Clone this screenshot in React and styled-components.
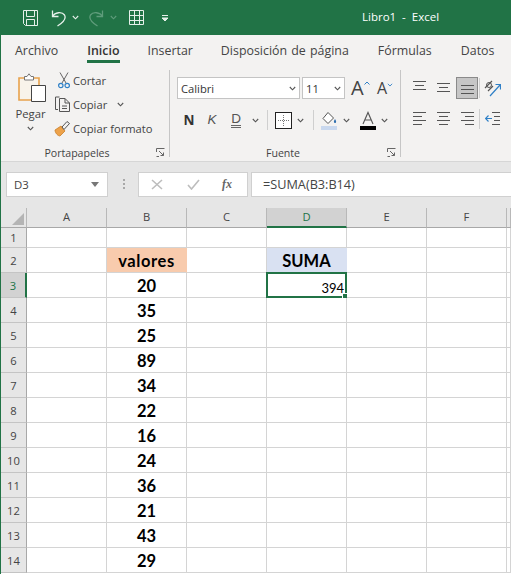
import * as React from 'react'
import styled, { createGlobalStyle } from 'styled-components'

const GREEN = '#217346'
const UI_FONT = '"Open Sans", "Noto Sans", sans-serif'

const GlobalStyle = createGlobalStyle`
  html, body {
    margin: 0;
    padding: 0;
    overflow: hidden;
    background: #fff;
  }
  * {
    box-sizing: border-box;
  }
`

const Window = styled.div`
  width: 511px;
  height: 574px;
  overflow: hidden;
  border-left: 1px solid ${GREEN};
  font-family: ${UI_FONT};
  color: #444;
  background: #fff;
`

const TitleBar = styled.header`
  height: 35px;
  margin-left: -1px;
  background: ${GREEN};
  display: flex;
  align-items: center;
  padding-left: 22px;
`

const TitleText = styled.span`
  position: absolute;
  left: 362px;
  top: 9px;
  color: #fff;
  font-size: 11.5px;
  line-height: 16px;
  white-space: pre;
`

const QatSlot = styled.span`
  display: flex;
  align-items: center;
  margin-left: ${(p) => p.$left || 0}px;
  transform: ${(p) => (p.$flip ? 'scaleX(-1)' : 'none')};
`

const Tabs = styled.nav`
  height: 30px;
  background: #f3f2f1;
  display: flex;
  gap: 28px;
  padding-left: 14px;
`

const Tab = styled.span`
  height: 28px;
  padding-top: 3px;
  line-height: 26px;
  font-size: 12.4px;
  word-spacing: 1px;
  white-space: nowrap;
  margin-left: ${(p) => p.$left || 0}px;
  color: ${(p) => (p.$active ? '#333' : '#444')};
  font-weight: ${(p) => (p.$active ? 600 : 400)};
  border-bottom: 3px solid ${(p) => (p.$active ? GREEN : 'transparent')};
`

const Ribbon = styled.section`
  height: 97px;
  background: #f3f2f1;
  border-bottom: 1px solid #d6d6d6;
  display: flex;
  padding-top: 4px;
`

const Group = styled.div`
  width: ${(p) => p.$width}px;
  flex: none;
  display: flex;
  flex-direction: column;
  position: relative;
`

const GroupBody = styled.div`
  height: 76px;
  display: flex;
`

const GroupLabel = styled.div`
  height: 16px;
  line-height: 16px;
  font-size: 10.6px;
  color: #444;
  display: flex;
  align-items: center;
  justify-content: center;
  padding-right: ${(p) => p.$shift || 0}px;
`

const Launcher = styled.svg`
  position: absolute;
  right: 4px;
  bottom: 4px;
  width: 9px;
  height: 9px;
`

const GroupDivider = styled.div`
  flex: none;
  width: 1px;
  height: 87px;
  margin-top: 1px;
  background: #c6c6c6;
`

const PasteColumn = styled.div`
  width: 53px;
  padding-top: 4px;
  display: flex;
  flex-direction: column;
  align-items: center;
  padding-left: 6px;
  font-size: 11.3px;
  line-height: 14px;
  gap: 5px;
  svg:first-child {
    margin-left: 3px;
  }
`

const ClipTools = styled.div`
  display: flex;
  flex-direction: column;
  margin-top: -1px;
`

const ClipRow = styled.div`
  height: 24px;
  display: flex;
  align-items: center;
  font-size: 11.2px;
  white-space: nowrap;
`

const ClipIcon = styled.span`
  width: 19px;
  display: flex;
  justify-content: ${(p) => (p.$start ? 'flex-start' : 'center')};
`

const FontColumn = styled.div`
  display: flex;
  flex-direction: column;
  padding-left: 7px;
  padding-top: 8px;
`

const ControlRow = styled.div`
  display: flex;
  align-items: center;
  height: ${(p) => p.$height}px;
  margin-bottom: ${(p) => p.$gap || 0}px;
`

const Combo = styled.div`
  width: ${(p) => p.$width}px;
  height: 22px;
  margin-right: 2px;
  background: #fff;
  border: 1px solid #c4c4c4;
  display: flex;
  align-items: center;
  justify-content: space-between;
  padding: 0 3px 0 3px;
  font-size: 11.2px;
  color: #333;
`

const Spot = styled.span`
  display: flex;
  align-items: center;
  justify-content: center;
  flex: none;
  width: ${(p) => p.$width}px;
  margin-left: ${(p) => p.$left || 0}px;
`

const SizeStep = styled.span`
  display: flex;
  align-items: flex-start;
  flex: none;
  width: ${(p) => p.$width}px;
  margin-left: ${(p) => p.$left}px;
`

const LetterA = styled.span`
  font-size: ${(p) => p.$size}px;
  line-height: 1;
  color: #444;
`

const StepMark = styled.span`
  margin-top: 3px;
  display: flex;
`

const StyleLetter = styled.span`
  font-family: ${(p) => (p.$bold ? '"Open Sans"' : '"Liberation Sans"')}, sans-serif;
  font-size: 13.5px;
  font-weight: ${(p) => (p.$bold ? 700 : 400)};
  font-style: ${(p) => (p.$italic ? 'italic' : 'normal')};
  color: ${(p) => (p.$bold ? '#333' : '#555')};
  border-bottom: ${(p) => (p.$under ? '3px double #666' : 'none')};
  line-height: ${(p) => (p.$under ? '13px' : '16px')};
`

const VRule = styled.span`
  flex: none;
  width: 1px;
  height: 20px;
  background: #cfcfcf;
  margin-left: ${(p) => p.$left || 0}px;
`

const AlignColumn = styled.div`
  display: grid;
  grid-template-columns: 24px 24px 24px 1px 24px;
  grid-template-rows: 22px 20px;
  row-gap: 10px;
  padding: 8px 0 0 6px;
  align-items: center;
  justify-items: center;
`

const AlignButton = styled.span`
  width: 22px;
  height: 22px;
  display: flex;
  align-items: center;
  justify-content: center;
  border: ${(p) => (p.$on ? '1px solid #8a8a8a' : 'none')};
  background: ${(p) => (p.$on ? '#c6c6c6' : 'transparent')};
`

const FormulaStrip = styled.section`
  height: 46px;
  background: #e6e6e6;
  display: flex;
  align-items: flex-start;
  padding: 10px 0 0 5px;
`

const NameBox = styled.div`
  width: 102px;
  height: 25px;
  background: #fff;
  border: 1px solid #d0d0d0;
  display: flex;
  align-items: center;
  justify-content: space-between;
  padding: 0 8px 0 7px;
  font-size: 11.4px;
  color: #444;
`

const Caret = styled.span`
  width: 0;
  height: 0;
  border-left: 4px solid transparent;
  border-right: 4px solid transparent;
  border-top: 5px solid #777;
`

const GripDots = styled.span`
  width: 2px;
  height: 10px;
  margin: 7px 13px 0 15px;
  background: repeating-linear-gradient(#a8a8a8 0 2px, transparent 2px 4px);
`

const FxBox = styled.div`
  width: 110px;
  height: 25px;
  background: #fff;
  border: 1px solid #d0d0d0;
  display: flex;
  align-items: center;
  padding-left: 12px;
  gap: 24px;
`

const FxLabel = styled.span`
  font-family: "Liberation Serif", serif;
  font-style: italic;
  font-weight: 700;
  font-size: 12px;
  color: #666;
  margin-left: -2px;
`

const FormulaInput = styled.div`
  flex: 1;
  height: 25px;
  margin-left: 3px;
  background: #fff;
  border: 1px solid #d0d0d0;
  border-right: none;
  padding-left: 11px;
  line-height: 23px;
  font-size: 12.7px;
  color: #444;
`

const Sheet = styled.div`
  display: grid;
  grid-template-columns: 26px repeat(6, 80px) 1fr;
  grid-template-rows: 20px 20px repeat(13, 25px);
  background: #fff;
`

const Corner = styled.div`
  background: #e6e6e6;
  border-bottom: 1px solid #a8a8a8;
  border-right: 1px solid #b8b8b8;
  position: relative;
  &::after {
    content: '';
    position: absolute;
    right: 2px;
    bottom: 2px;
    border-left: 12px solid transparent;
    border-bottom: 12px solid #b4b4b4;
  }
`

const ColHead = styled.div`
  background: ${(p) => (p.$on ? '#d2d2d2' : '#e6e6e6')};
  color: ${(p) => (p.$on ? GREEN : '#444')};
  border-right: 1px solid #b8b8b8;
  border-bottom: ${(p) => (p.$on ? `2px solid ${GREEN}` : '1px solid #a8a8a8')};
  font-size: 11.2px;
  line-height: 18px;
  text-align: center;
`

const RowHead = styled.div`
  background: ${(p) => (p.$on ? '#d2d2d2' : '#e6e6e6')};
  color: ${(p) => (p.$on ? GREEN : '#444')};
  border-right: ${(p) => (p.$on ? `2px solid ${GREEN}` : '1px solid #a8a8a8')};
  border-bottom: 1px solid #c4c4c4;
  font-size: 11.2px;
  display: flex;
  align-items: center;
  justify-content: center;
`

const Cell = styled.div`
  position: relative;
  background: ${(p) => p.$fill || '#fff'};
  border-right: 1px solid ${(p) => p.$fill || '#d4d4d4'};
  border-bottom: 1px solid #d4d4d4;
  font-family: Lato, "Liberation Sans", sans-serif;
  font-size: ${(p) => (p.$bold ? 16.5 : 13)}px;
  font-weight: ${(p) => (p.$bold ? 700 : 400)};
  letter-spacing: ${(p) => p.$track || 0}px;
  color: #000;
  display: flex;
  align-items: flex-end;
  justify-content: ${(p) => (p.$right ? 'flex-end' : 'center')};
  padding-right: ${(p) => (p.$right ? 2 : 0)}px;
  padding-bottom: 1px;
`

const Selection = styled.span`
  position: absolute;
  left: -1px;
  top: -1px;
  right: -1px;
  bottom: -1px;
  border: 2px solid ${GREEN};
  pointer-events: none;
  &::after {
    content: '';
    position: absolute;
    right: -4px;
    bottom: -4px;
    width: 6px;
    height: 6px;
    background: ${GREEN};
    border: 1px solid #fff;
    border-right: none;
    border-bottom: none;
  }
`

function Chevron({ color = '#555', size = 7 }) {
  return (
    <svg width={size} height={size - 2} viewBox="0 0 7 5" fill="none">
      <path d="M0.8 1 L3.5 3.8 L6.2 1" stroke={color} strokeWidth="1.1" />
    </svg>
  )
}

function SaveIcon() {
  return (
    <svg width="17" height="18" viewBox="0 0 17 18" fill="none" stroke="#e6f0ea" strokeWidth="1">
      <path d="M1.5 1.5 H15.5 V16.5 H3.5 L1.5 14.5 Z" />
      <path d="M4.5 1.5 V7.5 H12.5 V1.5" />
      <path d="M4.5 16.5 V10.5 H12.5 V16.5" />
    </svg>
  )
}

function UndoIcon({ color }) {
  return (
    <svg width="16" height="18" viewBox="0 0 16 18" fill="none" stroke={color} strokeWidth="1.3">
      <path d="M1.5 1.5 V7.5 H7.5" />
      <path d="M1.5 7.5 C4 3 11 2.5 13.5 6 C15.5 9.5 12 13.5 6.5 17" />
    </svg>
  )
}

function TableIcon() {
  return (
    <svg width="17" height="17" viewBox="0 0 17 17" fill="none" stroke="#e6f0ea" strokeWidth="1">
      <path d="M1.5 1.5 H15.5 V15.5 H1.5 Z M1.5 6.5 H15.5 M1.5 11.5 H15.5 M6.5 1.5 V15.5 M11.5 1.5 V15.5" />
    </svg>
  )
}

function CustomizeIcon() {
  return (
    <svg width="8" height="8" viewBox="0 0 8 8" fill="none" stroke="#e6f0ea" strokeWidth="1">
      <path d="M1 1.5 H7" />
      <path d="M1 4 L4 7 L7 4 Z" fill="#e6f0ea" />
    </svg>
  )
}

function PasteIcon() {
  return (
    <svg width="28" height="29" viewBox="0 0 28 29" fill="none">
      <path d="M1 5 H21 V27 H1 Z" stroke="#e8a24d" strokeWidth="1.6" fill="#f8f3ea" />
      <path d="M6.5 7 V3.5 H9 L11 0.8 L13 3.5 H15.5 V7 Z" stroke="#777" strokeWidth="1" fill="#fff" />
      <path d="M13.5 12.5 H27.5 V28.5 H13.5 Z" stroke="#444" strokeWidth="1" fill="#fff" />
    </svg>
  )
}

function ScissorsIcon() {
  return (
    <svg width="12" height="17" viewBox="0 0 12 17" fill="none">
      <path d="M2 0.5 L8 11 M10 0.5 L4 11" stroke="#666" strokeWidth="1" />
      <circle cx="2.8" cy="13.5" r="2.2" stroke="#2f80c7" strokeWidth="1.2" />
      <circle cx="9.2" cy="13.5" r="2.2" stroke="#2f80c7" strokeWidth="1.2" />
    </svg>
  )
}

function CopyIcon() {
  return (
    <svg width="17" height="16" viewBox="0 0 17 16" fill="none" stroke="#555" strokeWidth="1">
      <path d="M5.5 1 H1.5 V13.5 H4" />
      <path d="M5.5 2.5 H11 L15.5 7 V15.5 H5.5 Z" fill="#f3f2f1" />
      <path d="M11 2.5 V7 H15.5 M8 10 H13 M8 12.5 H13" />
    </svg>
  )
}

function BrushIcon() {
  return (
    <svg width="17" height="17" viewBox="0 0 17 17" fill="none">
      <path d="M1 10 L7 6 L11 11 L6 16 C4 16 1 13 1 10 Z" fill="#eda24a" stroke="#c97f28" strokeWidth="0.8" />
      <path d="M8 7 L13 1.5 L15.5 3.5 L10 9.5 Z" fill="#f3f2f1" stroke="#555" strokeWidth="1" />
    </svg>
  )
}

function LauncherGlyph() {
  return (
    <Launcher viewBox="0 0 9 9" fill="none" stroke="#666" strokeWidth="1">
      <path d="M0.5 4 V0.5 H8.5 M3 3 L7.5 7.5 M7.5 4.5 V7.5 H4.5" />
      <path d="M0.5 8.5 H3" />
    </Launcher>
  )
}

function BorderIcon() {
  return (
    <svg width="17" height="17" viewBox="0 0 17 17" fill="none">
      <rect x="0.5" y="0.5" width="16" height="16" stroke="#222" fill="#fff" />
      <path d="M8.5 3 V14 M3 8.5 H14" stroke="#777" strokeDasharray="1 1" />
    </svg>
  )
}

function FillIcon() {
  return (
    <svg width="17" height="19" viewBox="0 0 17 19" fill="none">
      <path d="M7 1.5 L12.5 7 L7 12.5 L2 7.5 Z" fill="#fff" stroke="#555" />
      <path d="M14 8 C15.5 10 15.5 12 14 12 C12.5 12 12.5 10 14 8 Z" fill="#2f6fb0" />
      <rect x="0" y="15" width="16" height="4" fill="#c9d8ee" />
    </svg>
  )
}

function FontColorIcon() {
  return (
    <svg width="16" height="19" viewBox="0 0 16 19" fill="none">
      <path d="M3 13 L8 1.5 L13 13 M5 9 H11" stroke="#555" strokeWidth="1.1" />
      <rect x="0" y="15" width="16" height="4" fill="#000" />
    </svg>
  )
}

function Lines({ rows, top = 0 }) {
  return (
    <svg width="15" height="14" viewBox="0 0 15 14" fill="none" stroke="#555" strokeWidth="1">
      {rows.map(([x1, x2], i) => (
        <path key={i} d={`M${x1} ${top + i * 4 + 0.5} H${x2}`} />
      ))}
    </svg>
  )
}

function OrientationIcon() {
  return (
    <svg width="17" height="17" viewBox="0 0 17 17" fill="none">
      <path d="M1 8 L8 1 M4 11 L9 6" stroke="#555" strokeWidth="1.2" />
      <circle cx="5" cy="5" r="2.5" stroke="#555" />
      <path d="M6 16 L16 5 M11.5 4.5 H16.5 V9.5" stroke="#2f80c7" strokeWidth="1.2" />
    </svg>
  )
}

function IndentIcon() {
  return (
    <svg width="15" height="14" viewBox="0 0 15 14" fill="none">
      <path d="M7 0.5 H15 M9 4.5 H15 M9 8.5 H15 M7 12.5 H15" stroke="#555" />
      <path d="M0.5 6.5 H7 M3.5 3.5 L0.5 6.5 L3.5 9.5" stroke="#2f80c7" strokeWidth="1.2" />
    </svg>
  )
}

const columns = ['A', 'B', 'C', 'D', 'E', 'F']

const cells = {
  B2: { text: 'valores', bold: true, fill: '#f8cbad', track: 0.6 },
  D2: { text: 'SUMA', bold: true, fill: '#d9e1f2' },
  D3: { text: '394', right: true, selected: true },
  B3: { text: '20', bold: true },
  B4: { text: '35', bold: true },
  B5: { text: '25', bold: true },
  B6: { text: '89', bold: true },
  B7: { text: '34', bold: true },
  B8: { text: '22', bold: true },
  B9: { text: '16', bold: true },
  B10: { text: '24', bold: true },
  B11: { text: '36', bold: true },
  B12: { text: '21', bold: true },
  B13: { text: '43', bold: true },
  B14: { text: '29', bold: true },
}

function SheetGrid() {
  const rows = Array.from({ length: 14 }, (_, i) => i + 1)
  return (
    <Sheet>
      <Corner />
      {columns.map((c) => (
        <ColHead key={c} $on={c === 'D'}>
          {c}
        </ColHead>
      ))}
      <ColHead />
      {rows.map((r) => (
        <React.Fragment key={r}>
          <RowHead $on={r === 3}>{r}</RowHead>
          {columns.map((c) => {
            const cell = cells[c + r] || {}
            return (
              <Cell key={c} $bold={cell.bold} $fill={cell.fill} $right={cell.right} $track={cell.track}>
                {cell.text}
                {cell.selected && <Selection />}
              </Cell>
            )
          })}
          <Cell />
        </React.Fragment>
      ))}
    </Sheet>
  )
}

export default function App() {
  return (
    <Window>
      <GlobalStyle />
      <TitleBar>
        <QatSlot>
          <SaveIcon />
        </QatSlot>
        <QatSlot $left={12}>
          <UndoIcon color="#e6f0ea" />
        </QatSlot>
        <QatSlot $left={5}>
          <Chevron color="#e6f0ea" />
        </QatSlot>
        <QatSlot $left={9} $flip>
          <UndoIcon color="#5f9c7b" />
        </QatSlot>
        <QatSlot $left={6}>
          <Chevron color="#5f9c7b" />
        </QatSlot>
        <QatSlot $left={11}>
          <TableIcon />
        </QatSlot>
        <QatSlot $left={16}>
          <CustomizeIcon />
        </QatSlot>
        <TitleText>Libro1  -  Excel</TitleText>
      </TitleBar>
      <Tabs>
        <Tab>Archivo</Tab>
        <Tab $active $left={1}>Inicio</Tab>
        <Tab>Insertar</Tab>
        <Tab>Disposición de página</Tab>
        <Tab $left={1}>Fórmulas</Tab>
        <Tab $left={1}>Datos</Tab>
      </Tabs>
      <Ribbon>
        <Group $width={168}>
          <GroupBody>
            <PasteColumn>
              <PasteIcon />
              <span>Pegar</span>
              <Chevron />
            </PasteColumn>
            <ClipTools>
              <ClipRow>
                <ClipIcon>
                  <ScissorsIcon />
                </ClipIcon>
                Cortar
              </ClipRow>
              <ClipRow>
                <ClipIcon $start>
                  <CopyIcon />
                </ClipIcon>
                Copiar
                <Spot $width={7} $left={10}>
                  <Chevron />
                </Spot>
              </ClipRow>
              <ClipRow>
                <ClipIcon $start>
                  <BrushIcon />
                </ClipIcon>
                Copiar formato
              </ClipRow>
            </ClipTools>
          </GroupBody>
          <GroupLabel $shift={16}>Portapapeles</GroupLabel>
          <LauncherGlyph />
        </Group>
        <GroupDivider />
        <Group $width={230}>
          <GroupBody>
            <FontColumn>
              <ControlRow $height={22} $gap={11}>
                <Combo $width={123}>
                  Calibri
                  <Chevron />
                </Combo>
                <Combo $width={43}>
                  11
                  <Chevron />
                </Combo>
                <SizeStep $width={20} $left={4}>
                  <LetterA $size={20}>A</LetterA>
                  <StepMark>
                    <svg width="6" height="4" viewBox="0 0 6 4" fill="none" stroke="#2f80c7">
                      <path d="M0.5 3.5 L3 1 L5.5 3.5" />
                    </svg>
                  </StepMark>
                </SizeStep>
                <SizeStep $width={18} $left={6}>
                  <LetterA $size={16}>A</LetterA>
                  <StepMark>
                    <Chevron color="#2f80c7" size={6} />
                  </StepMark>
                </SizeStep>
              </ControlRow>
              <ControlRow $height={20}>
                <Spot $width={12} $left={6}>
                  <StyleLetter $bold>N</StyleLetter>
                </Spot>
                <Spot $width={12} $left={11}>
                  <StyleLetter $italic>K</StyleLetter>
                </Spot>
                <Spot $width={12} $left={12}>
                  <StyleLetter $under>D</StyleLetter>
                </Spot>
                <Spot $width={7} $left={10}>
                  <Chevron />
                </Spot>
                <VRule $left={8} />
                <Spot $width={17} $left={7}>
                  <BorderIcon />
                </Spot>
                <Spot $width={7} $left={5}>
                  <Chevron />
                </Spot>
                <VRule $left={9} />
                <Spot $width={17} $left={7}>
                  <FillIcon />
                </Spot>
                <Spot $width={7} $left={5}>
                  <Chevron />
                </Spot>
                <Spot $width={16} $left={10}>
                  <FontColorIcon />
                </Spot>
                <Spot $width={7} $left={5}>
                  <Chevron />
                </Spot>
              </ControlRow>
            </FontColumn>
          </GroupBody>
          <GroupLabel $shift={4}>Fuente</GroupLabel>
          <LauncherGlyph />
        </Group>
        <GroupDivider />
        <Group $width={110}>
          <AlignColumn>
            <Lines rows={[[1, 14], [3, 12], [1, 14]]} />
            <Lines rows={[[1, 14], [3, 12], [1, 14]]} top={2} />
            <AlignButton $on>
              <Lines rows={[[1, 14], [1, 14], [1, 14]]} top={4} />
            </AlignButton>
            <VRule />
            <OrientationIcon />
            <Lines rows={[[1, 14], [1, 10], [1, 14], [1, 10]]} />
            <Lines rows={[[1, 14], [3, 12], [1, 14], [3, 12]]} />
            <Lines rows={[[1, 14], [5, 14], [1, 14], [5, 14]]} />
            <VRule />
            <IndentIcon />
          </AlignColumn>
        </Group>
      </Ribbon>
      <FormulaStrip>
        <NameBox>
          D3
          <Caret />
        </NameBox>
        <GripDots />
        <FxBox>
          <svg width="12" height="11" viewBox="0 0 12 11" fill="none" stroke="#bdbdbd" strokeWidth="1.6">
            <path d="M1 1 L11 10 M11 1 L1 10" />
          </svg>
          <svg width="13" height="11" viewBox="0 0 13 11" fill="none" stroke="#bdbdbd" strokeWidth="1.6">
            <path d="M1 6 L4.5 10 L12 1" />
          </svg>
          <FxLabel>fx</FxLabel>
        </FxBox>
        <FormulaInput>=SUMA(B3:B14)</FormulaInput>
      </FormulaStrip>
      <SheetGrid />
    </Window>
  )
}
